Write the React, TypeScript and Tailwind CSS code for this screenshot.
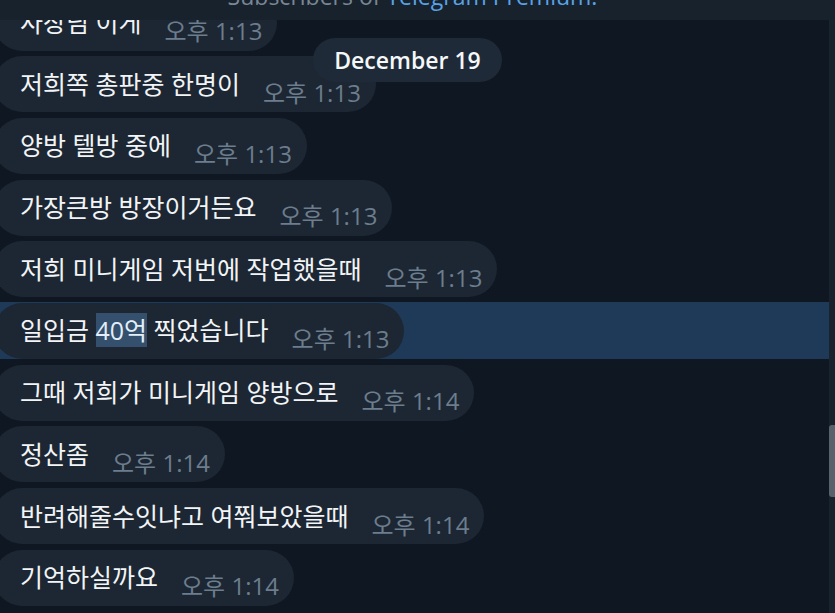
import React from 'react';

type Message = {
  id: number;
  text: React.ReactNode;
  time: string;
  selected?: boolean;
};

const FONT = "font-['Open_Sans','Noto_Sans_CJK_KR',sans-serif]";

const messages: Message[] = [
  { id: 1, text: '사장님 이게', time: '오후 1:13' },
  { id: 2, text: '저희쪽 총판중 한명이', time: '오후 1:13' },
  { id: 3, text: '양방 텔방 중에', time: '오후 1:13' },
  { id: 4, text: '가장큰방 방장이거든요', time: '오후 1:13' },
  { id: 5, text: '저희 미니게임 저번에 작업했을때', time: '오후 1:13' },
  {
    id: 6,
    text: (
      <>
        일입금 <span className="bg-[#34506d] text-[#e3eefa]">40억</span> 찍었습니다
      </>
    ),
    time: '오후 1:13',
    selected: true,
  },
  { id: 7, text: '그때 저희가 미니게임 양방으로', time: '오후 1:14' },
  { id: 8, text: '정산좀', time: '오후 1:14' },
  { id: 9, text: '반려해줄수잇냐고 여쭤보았을때', time: '오후 1:14' },
  { id: 10, text: '기억하실까요', time: '오후 1:14' },
];

function Bubble({ msg }: { msg: Message }) {
  return (
    <div className={msg.selected ? 'flex h-[57px] items-center bg-[#1f3a59]' : 'flex h-[57px] items-center'}>
      <div className="-ml-[6px] flex h-[56px] items-center rounded-[28px] bg-[#1c2733] pl-[26px] pr-[15px]">
        <span className="whitespace-nowrap text-[25px] leading-none text-[#f2f4f6]">{msg.text}</span>
        <span className="ml-[23px] mt-[17px] whitespace-nowrap text-[24px] leading-none text-[#6c7d8d]">
          {msg.time}
        </span>
      </div>
    </div>
  );
}

export default function App() {
  return (
    <div className={`${FONT} relative h-[613px] w-[835px] overflow-hidden bg-[#0f1722]`}>
      <div className="flex h-full">
        <div className="relative flex-1 overflow-hidden">
          <div className="-mt-[6px] flex flex-col gap-[4.7px]">
            {messages.map((m) => (
              <Bubble key={m.id} msg={m} />
            ))}
          </div>
          <div className="absolute left-[313px] top-[38px] flex h-[44px] w-[189px] items-center justify-center rounded-full bg-[#1e2a37] text-[23px] font-semibold text-[#f5f7f9]">
            December 19
          </div>
        </div>
        <div className="flex w-[6px] flex-col bg-[#19232e] pt-[20px]">
          <div className="mt-[405px] h-[72px] rounded-l-[3px] bg-[#58626c]" />
        </div>
      </div>
      <div className="absolute left-0 top-0 flex h-[20px] w-full items-end justify-center overflow-hidden bg-[#18222d]">
        <div className="mb-[12px] ml-[-10px] whitespace-nowrap text-[23px] leading-none text-[#7a8794]">
          Subscribers of <span className="text-[#5aa3e6]">Telegram Premium.</span>
        </div>
      </div>
    </div>
  );
}
